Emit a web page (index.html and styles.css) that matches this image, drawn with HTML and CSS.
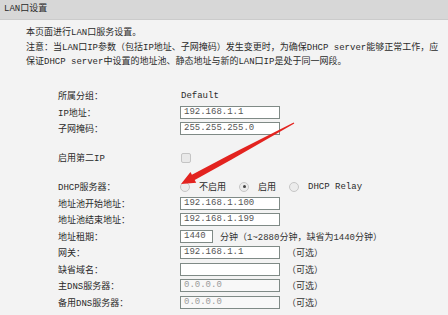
FILE: index.html
```html
<!DOCTYPE html>
<html lang="zh-CN">
<head>
    <meta charset="UTF-8">
    <title>LAN口设置</title>
    <link rel="stylesheet" href="styles.css">
</head>
<body>
    <div class="title-bar">LAN口设置</div>

    <div class="intro">
        <p>本页面进行LAN口服务设置。</p>
        <p>注意：当LAN口IP参数（包括IP地址、子网掩码）发生变更时，为确保DHCP server能够正常工作，应</p>
        <p>保证DHCP server中设置的地址池、静态地址与新的LAN口IP是处于同一网段。</p>
    </div>

    <div class="form">
        <div class="row">
            <span class="label">所属分组：</span>
            <span class="value">Default</span>
        </div>
        <div class="row">
            <span class="label">IP地址：</span>
            <span class="field">192.168.1.1</span>
        </div>
        <div class="row">
            <span class="label">子网掩码：</span>
            <span class="field">255.255.255.0</span>
        </div>

        <div class="spacer"></div>

        <div class="row">
            <span class="label">启用第二IP</span>
            <span class="checkbox"></span>
        </div>

        <div class="spacer"></div>

        <div class="row">
            <span class="label">DHCP服务器：</span>
            <span class="radio"></span><span class="radio-text">不启用</span>
            <span class="radio checked"></span><span class="radio-text">启用</span>
            <span class="radio"></span><span class="radio-text">DHCP Relay</span>
        </div>
        <div class="row">
            <span class="label">地址池开始地址：</span>
            <span class="field">192.168.1.100</span>
        </div>
        <div class="row">
            <span class="label">地址池结束地址：</span>
            <span class="field">192.168.1.199</span>
        </div>
        <div class="row">
            <span class="label">地址租期：</span>
            <span class="field short">1440</span>
            <span class="note">分钟（1~2880分钟，缺省为1440分钟）</span>
        </div>
        <div class="row">
            <span class="label">网关：</span>
            <span class="field">192.168.1.1</span>
            <span class="note">（可选）</span>
        </div>
        <div class="row">
            <span class="label">缺省域名：</span>
            <span class="field"></span>
            <span class="note">（可选）</span>
        </div>
        <div class="row">
            <span class="label">主DNS服务器：</span>
            <span class="field dim">0.0.0.0</span>
            <span class="note">（可选）</span>
        </div>
        <div class="row">
            <span class="label">备用DNS服务器：</span>
            <span class="field dim">0.0.0.0</span>
            <span class="note">（可选）</span>
        </div>
    </div>

    <!-- annotation arrow drawn over the screenshot -->
    <svg class="arrow" width="448" height="315" viewBox="0 0 448 315">
        <polygon fill="#e3231f" points="294.3,123.5 231.2,159.7 194.7,180 196.2,182.7 181,184 190.5,172.1 191.9,174.8 228.8,155.3 293.7,122.5"/>
    </svg>
</body>
</html>
```

FILE: styles.css
```css
body {
    margin: 0;
    background: #f3f3f3;
    color: #2a2a2a;
    font-family: "Liberation Mono", "Noto Sans CJK SC", monospace;
    font-size: 9px;
    position: relative;
    width: 448px;
    height: 315px;
    overflow: hidden;
}

.title-bar {
    height: 20px;
    line-height: 19px;
    padding-left: 4px;
    background: #d7d7d7;
    border-bottom: 1px solid #cbcbcb;
    box-sizing: border-box;
}

.intro {
    padding: 6px 0 0 26px;
}

.intro p {
    margin: 0;
    line-height: 14.5px;
    white-space: nowrap;
}

.form {
    padding: 18px 0 0 58px;
}

.row {
    display: flex;
    align-items: center;
    height: 16.5px;
    white-space: nowrap;
}

.spacer {
    height: 12.5px;
}

.label {
    width: 122px;
    flex-shrink: 0;
}

.value {
    padding-left: 1px;
}

.field {
    width: 100px;
    height: 13px;
    box-sizing: border-box;
    border: 1px solid #7f8a86;
    background: #fff;
    padding-left: 3px;
    line-height: 11px;
    color: #555;
}

.field.short {
    width: 33px;
}

.field.dim {
    color: #9a9a9a;
    background: #f8f8f8;
}

.note {
    margin-left: 7px;
    color: #333;
}

.checkbox {
    width: 8px;
    height: 8px;
    margin-left: 1px;
    border: 1px solid #c4c4c4;
    border-radius: 2px;
    background: #e9e9e9;
}

.radio {
    width: 8px;
    height: 8px;
    border: 1px solid #c6c6c6;
    border-radius: 50%;
    background: #ececec;
    position: relative;
}

.radio.checked::after {
    content: "";
    position: absolute;
    left: 2.5px;
    top: 2.5px;
    width: 3px;
    height: 3px;
    border-radius: 50%;
    background: #444;
}

.radio-text {
    margin: 0 13px 0 9px;
}

.arrow {
    position: absolute;
    left: 0;
    top: 0;
    pointer-events: none;
}
```
